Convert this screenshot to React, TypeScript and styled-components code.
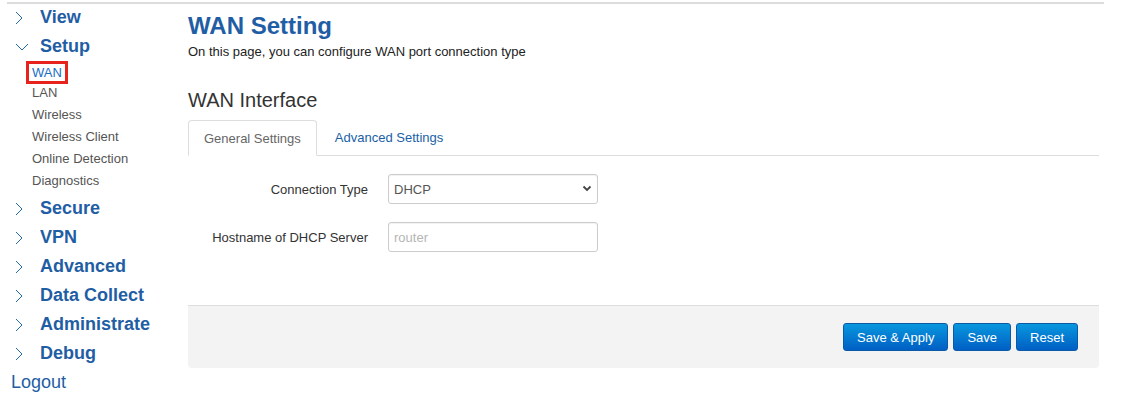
import React, { useState } from 'react';
import styled, { createGlobalStyle } from 'styled-components';

const GlobalStyle = createGlobalStyle`
  html, body {
    margin: 0;
    padding: 0;
    background: #fff;
    font-family: "Liberation Sans", Arial, sans-serif;
  }
`;

const Page = styled.div`
  width: 1121px;
`;

const TopRule = styled.div`
  height: 2px;
  margin: 2px 17px 0 7px;
  background: #dcdcdc;
`;

const Body = styled.div`
  display: flex;
`;

const Sidebar = styled.nav`
  width: 188px;
  flex-shrink: 0;
  display: flex;
  flex-direction: column;
  margin-top: -1px;
`;

const MenuRow = styled.div`
  display: flex;
  align-items: center;
  height: 29px;
  padding-left: 15px;
  color: #1f5ea4;
  font-size: 18px;
  font-weight: bold;
`;

const ChevronBox = styled.span`
  width: 25px;
  display: inline-flex;
  align-items: center;
`;

const SubList = styled.div`
  display: flex;
  flex-direction: column;
  align-items: flex-start;
`;

const SubItem = styled.a<{ $active?: boolean }>`
  display: inline-block;
  box-sizing: border-box;
  height: ${(p) => (p.$active ? '23px' : '22px')};
  line-height: ${(p) => (p.$active ? '17px' : '18px')};
  font-size: 13px;
  text-decoration: none;
  color: ${(p) => (p.$active ? '#1a6dc4' : '#555')};
  margin-left: ${(p) => (p.$active ? '26px' : '32px')};
  padding: ${(p) => (p.$active ? '0 3px' : '0')};
  border: ${(p) => (p.$active ? '3px solid #e8231e' : 'none')};
`;

const Logout = styled.a`
  height: 29px;
  display: flex;
  align-items: center;
  padding-left: 11px;
  font-size: 18px;
  color: #1f5ea4;
  text-decoration: none;
`;

const Main = styled.main`
  flex: 1;
  margin-right: 22px;
  padding-top: 7px;
`;

const Title = styled.h1`
  margin: 0;
  font-size: 24px;
  line-height: 30px;
  font-weight: bold;
  color: #1f5ea4;
`;

const Subtitle = styled.p`
  margin: 3px 0 0;
  font-size: 13px;
  line-height: 16px;
  color: #222;
`;

const SectionTitle = styled.h2`
  margin: 28px 0 0;
  font-size: 20px;
  line-height: 24px;
  font-weight: normal;
  color: #333;
`;

const TabBar = styled.div`
  margin-top: 8px;
  display: flex;
  align-items: flex-end;
  border-bottom: 1px solid #ddd;
  height: 35px;
`;

const Tab = styled.button<{ $active?: boolean }>`
  height: ${(p) => (p.$active ? '36px' : '35px')};
  margin-bottom: ${(p) => (p.$active ? '-1px' : '0')};
  padding: 0 15px;
  margin-right: 2px;
  font-family: inherit;
  font-size: 13px;
  background: #fff;
  cursor: pointer;
  color: ${(p) => (p.$active ? '#666' : '#1a5fa6')};
  border: 1px solid ${(p) => (p.$active ? '#ddd' : 'transparent')};
  border-bottom-color: ${(p) => (p.$active ? '#fff' : 'transparent')};
  border-radius: 4px 4px 0 0;
`;

const Form = styled.div`
  padding-top: 18px;
  display: flex;
  flex-direction: column;
  gap: 18px;
`;

const FieldRow = styled.div`
  display: flex;
  align-items: center;
`;

const Label = styled.label`
  width: 180px;
  text-align: right;
  padding-right: 20px;
  font-size: 13px;
  color: #333;
`;

const SelectWrap = styled.div`
  position: relative;
  width: 210px;
  height: 30px;
`;

const Select = styled.select`
  width: 100%;
  height: 100%;
  appearance: none;
  border: 1px solid #ccc;
  border-radius: 3px;
  background: #fff;
  padding: 0 24px 0 5px;
  font-family: inherit;
  font-size: 13px;
  color: #555;
  box-shadow: inset 0 1px 1px rgba(0, 0, 0, 0.06);
`;

const SelectArrow = styled.span`
  position: absolute;
  right: 6px;
  top: 11px;
  pointer-events: none;
  display: flex;
`;

const Input = styled.input`
  width: 210px;
  height: 30px;
  box-sizing: border-box;
  border: 1px solid #ccc;
  border-radius: 3px;
  padding: 0 5px;
  font-family: inherit;
  font-size: 13px;
  color: #555;
  box-shadow: inset 0 1px 1px rgba(0, 0, 0, 0.06);
  &::placeholder {
    color: #b5b5b5;
  }
`;

const Footer = styled.div`
  margin-top: 53px;
  height: 63px;
  box-sizing: border-box;
  border-top: 1px solid #ddd;
  background: #f3f3f3;
  border-radius: 0 0 4px 4px;
  display: flex;
  align-items: center;
  justify-content: flex-end;
  gap: 5px;
  padding-right: 21px;
`;

const Button = styled.button`
  height: 28px;
  padding: 0 13px;
  font-family: inherit;
  font-size: 13px;
  color: #fff;
  border: 1px solid #0a5aa8;
  border-radius: 3px;
  background: linear-gradient(#0897de, #005fc4);
  cursor: pointer;
`;

const Chevron = ({ open }: { open?: boolean }) =>
  open ? (
    <svg width="14" height="8" viewBox="0 0 14 8">
      <path d="M1 1 L7 7 L13 1" fill="none" stroke="#1f6aa8" strokeWidth="1" />
    </svg>
  ) : (
    <svg width="8" height="14" viewBox="0 0 8 14">
      <path d="M1 1 L7 7 L1 13" fill="none" stroke="#1f6aa8" strokeWidth="1" />
    </svg>
  );

const menusBefore = ['View'];
const menusAfter = ['Secure', 'VPN', 'Advanced', 'Data Collect', 'Administrate', 'Debug'];
const setupItems = ['WAN', 'LAN', 'Wireless', 'Wireless Client', 'Online Detection', 'Diagnostics'];

const App = () => {
  const [tab, setTab] = useState('general');

  return (
    <Page>
      <GlobalStyle />
      <TopRule />
      <Body>
        <Sidebar>
          {menusBefore.map((m) => (
            <MenuRow key={m}>
              <ChevronBox>
                <Chevron />
              </ChevronBox>
              {m}
            </MenuRow>
          ))}
          <MenuRow>
            <ChevronBox>
              <Chevron open />
            </ChevronBox>
            Setup
          </MenuRow>
          <SubList>
            {setupItems.map((s) => (
              <SubItem key={s} $active={s === 'WAN'} href="#">
                {s}
              </SubItem>
            ))}
          </SubList>
          {menusAfter.map((m) => (
            <MenuRow key={m}>
              <ChevronBox>
                <Chevron />
              </ChevronBox>
              {m}
            </MenuRow>
          ))}
          <Logout href="#">Logout</Logout>
        </Sidebar>
        <Main>
          <Title>WAN Setting</Title>
          <Subtitle>On this page, you can configure WAN port connection type</Subtitle>
          <SectionTitle>WAN Interface</SectionTitle>
          <TabBar>
            <Tab $active={tab === 'general'} onClick={() => setTab('general')}>
              General Settings
            </Tab>
            <Tab $active={tab === 'advanced'} onClick={() => setTab('advanced')}>
              Advanced Settings
            </Tab>
          </TabBar>
          <Form>
            <FieldRow>
              <Label>Connection Type</Label>
              <SelectWrap>
                <Select defaultValue="dhcp">
                  <option value="dhcp">DHCP</option>
                  <option value="static">Static IP</option>
                  <option value="pppoe">PPPoE</option>
                </Select>
                <SelectArrow>
                  <svg width="10" height="7" viewBox="0 0 10 7">
                    <path d="M1.5 1.5 L5 5 L8.5 1.5" fill="none" stroke="#444" strokeWidth="1.8" />
                  </svg>
                </SelectArrow>
              </SelectWrap>
            </FieldRow>
            <FieldRow>
              <Label>Hostname of DHCP Server</Label>
              <Input placeholder="router" />
            </FieldRow>
          </Form>
          <Footer>
            <Button>Save &amp; Apply</Button>
            <Button>Save</Button>
            <Button>Reset</Button>
          </Footer>
        </Main>
      </Body>
    </Page>
  );
};

export default App;
